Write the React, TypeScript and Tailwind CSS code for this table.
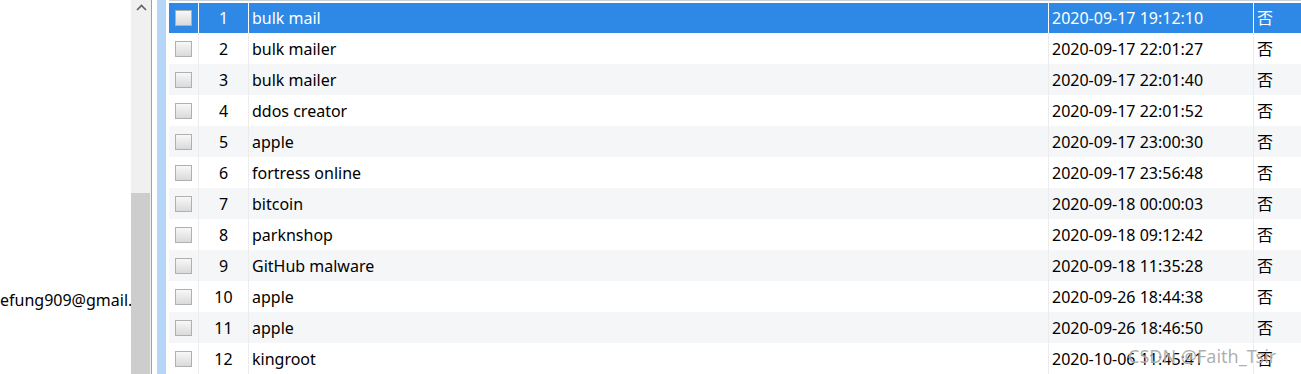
import React from 'react';

const rows = [
  { id: 1, name: 'bulk mail', time: '2020-09-17 19:12:10' },
  { id: 2, name: 'bulk mailer', time: '2020-09-17 22:01:27' },
  { id: 3, name: 'bulk mailer', time: '2020-09-17 22:01:40' },
  { id: 4, name: 'ddos creator', time: '2020-09-17 22:01:52' },
  { id: 5, name: 'apple', time: '2020-09-17 23:00:30' },
  { id: 6, name: 'fortress online', time: '2020-09-17 23:56:48' },
  { id: 7, name: 'bitcoin', time: '2020-09-18 00:00:03' },
  { id: 8, name: 'parknshop', time: '2020-09-18 09:12:42' },
  { id: 9, name: 'GitHub malware', time: '2020-09-18 11:35:28' },
  { id: 10, name: 'apple', time: '2020-09-26 18:44:38' },
  { id: 11, name: 'apple', time: '2020-09-26 18:46:50' },
  { id: 12, name: 'kingroot', time: '2020-10-06 11:45:41' },
];

function Checkbox() {
  return (
    <div className="w-[17px] h-[16px] border border-[#b0b0b0] bg-gradient-to-b from-[#f8f8f8] to-[#dadada]" />
  );
}

export default function App() {
  return (
    <div
      className="relative flex w-[1301px] h-[374px] overflow-hidden bg-white text-[16px] text-black"
      style={{ fontFamily: '"Noto Sans", "Noto Sans CJK SC", sans-serif' }}
    >
      {/* left panel */}
      <div className="w-[131px] shrink-0 overflow-hidden pt-[289px]">
        <div className="whitespace-nowrap leading-[22px]">efung909@gmail.com</div>
      </div>

      {/* scrollbar */}
      <div className="w-[20px] shrink-0 flex flex-col bg-[#f0f0f0]">
        <div className="h-[16px] flex items-start justify-center pt-[4px]">
          <svg width="11" height="7" viewBox="0 0 11 7">
            <path d="M1 6 L5.5 1.5 L10 6" fill="none" stroke="#606060" strokeWidth="1.6" />
          </svg>
        </div>
        <div className="h-[177px]" />
        <div className="flex-1 w-[19px] bg-[#cdcdcd]" />
      </div>
      <div className="w-px shrink-0 bg-[#a0a0a0]" />
      <div className="w-[5px] shrink-0" />
      <div className="w-[9px] shrink-0 bg-[#b5d6f6]" />
      <div className="w-[3px] shrink-0" />

      {/* table */}
      <div className="flex-1 flex flex-col">
        <div className="h-px bg-[#c8d2dc]" />
        <div className="h-[2px]" />
        {rows.map((r, i) => {
          const sel = i === 0;
          const bg = sel ? 'bg-[#2e89e6] text-white' : i % 2 === 0 ? 'bg-[#f5f6f7]' : 'bg-white';
          const line = sel ? 'border-white' : 'border-[#ececec]';
          return (
            <div key={r.id} className={`flex shrink-0 ${sel ? 'h-[30px]' : 'h-[31px]'} ${bg}`}>
              <div className={`w-[30px] shrink-0 flex items-center justify-center border-r ${line}`}>
                <Checkbox />
              </div>
              <div className={`w-[50px] shrink-0 flex items-center justify-center border-r ${line}`}>
                {r.id}
              </div>
              <div className={`w-[800px] shrink-0 flex items-center pl-[3px] border-r ${line}`}>
                {r.name}
              </div>
              <div className={`w-[205px] shrink-0 flex items-center pl-[3px] border-r ${line}`}>
                {r.time}
              </div>
              <div className="flex-1 flex items-center pl-[3px]">否</div>
            </div>
          );
        })}
      </div>

      <div className="absolute left-[1128px] top-[345px] text-[18px] leading-[22px] text-[rgba(120,120,120,0.6)] whitespace-nowrap [text-shadow:0_0_1px_rgba(255,255,255,0.9)]">
        CSDN @Faith_Tsir
      </div>
    </div>
  );
}
